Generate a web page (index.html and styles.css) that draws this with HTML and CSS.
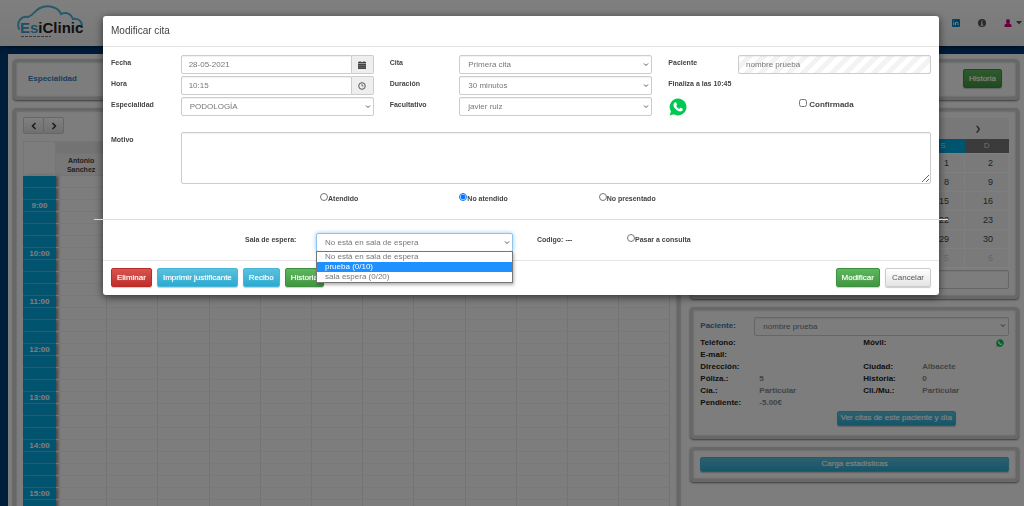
FILE: index.html
```
<!DOCTYPE html>
<html lang="es">
<head>
<meta charset="UTF-8" />
<meta name="viewport" content="width=device-width, initial-scale=1" />
<title>EsiClinic</title>
<link rel="stylesheet" href="styles.css">
</head>
<body>

<header class="navbar">
  <a href="#" class="logo" aria-label="EsiClinic">
    <svg width="70" height="34" viewBox="0 0 70 34">
      <path d="M3 24 C0 16 6 11 12 12 C17 11 18 6 24 3 C33 -1 43 3 45 9 C51 6 56 10 57 14 C62 13 66 16 66 21" fill="none" stroke="#4ab4dc" stroke-width="2" stroke-linecap="round" />
      <text x="4" y="28" class="logo-text"><tspan fill="#3aa0d0">Es</tspan><tspan fill="#222">iClinic</tspan></text>
      <path d="M5 31.500h30" stroke="#777" stroke-width="1" stroke-dasharray="3 1" />
    </svg>
  </a>
  <nav class="nav-icons">
    <a href="#" aria-label="LinkedIn">
      <svg width="8" height="8" viewBox="0 0 16 16"><rect width="16" height="16" rx="2" fill="#0080c0" /><path d="M3.500 6.500v6M3.500 3v1.500M7 12.500v-6M7 9q0-2.500 2.500-2.500T12 9v3.500" fill="none" stroke="#fff" stroke-width="2" /></svg>
    </a>
    <a href="#" class="info" aria-label="Información">
      <svg width="8" height="8" viewBox="0 0 16 16"><circle cx="8" cy="8" r="8" fill="#555" /><path d="M8 3v2.500M6 7.500h2v4.500M5.500 12.500h5" fill="none" stroke="#fff" stroke-width="2" /></svg>
    </a>
    <a href="#" class="user" aria-label="Usuario">
      <svg width="8" height="8" viewBox="0 0 16 16"><ellipse cx="8" cy="5" rx="4" ry="5" fill="#d6007f" /><path d="M1 16v-3q0-3 4-4h6q4 1 4 4v3z" fill="#d6007f" /></svg>
      <svg width="6" height="4" viewBox="0 0 6 4"><path d="M0 0h6L3 3.500z" fill="#555" /></svg>
    </a>
  </nav>
</header>

<main class="page">
  <section class="panel filter">
    <strong class="blue">Especialidad</strong>
    <button type="button" class="btn btn-success">Historia</button>
  </section>

  <div class="columns">
    <section class="panel agenda">
      <div class="btn-group">
        <button type="button" aria-label="Anterior"><svg width="6" height="8" viewBox="0 0 6 8"><path d="M4.500 1L1.500 4l3 3" /></svg></button>
        <button type="button" aria-label="Siguiente"><svg width="6" height="8" viewBox="0 0 6 8"><path d="M1.500 1l3 3-3 3" /></svg></button>
      </div>
      <table class="schedule">
        <thead>
          <tr><th rowspan="2" class="corner"></th><th colspan="12" class="top"></th></tr>
          <tr class="names"><th>Antonio Sanchez</th><th></th><th></th><th></th><th></th><th></th><th></th><th></th><th></th><th></th><th></th><th></th></tr>
        </thead>
        <tbody id="slots"></tbody>
      </table>
    </section>

    <aside class="side">
      <section class="panel month">
        <div class="month-head"><button type="button" aria-label="Mes siguiente">❯</button></div>
        <table class="days">
          <thead><tr><th>L</th><th>M</th><th>X</th><th>J</th><th>V</th><th>S</th><th>D</th></tr></thead>
          <tbody id="days"></tbody>
        </table>
        <input type="text" class="control" aria-label="Buscar">
      </section>

      <section class="panel patient">
        <div class="patient-pick">
          <label for="patient" class="blue">Paciente:</label>
          <select id="patient" class="control"><option>nombre prueba</option></select>
        </div>
        <dl class="data">
          <dt>Teléfono:</dt><dd></dd><dt>Móvil:</dt>
          <dd class="phone"><svg width="8" height="8" viewBox="0 0 32 32"><use href="#whatsapp" /></svg></dd>
          <dt>E-mail:</dt><dd class="wide"></dd>
          <dt>Dirección:</dt><dd></dd><dt>Ciudad:</dt><dd>Albacete</dd>
          <dt>Póliza.:</dt><dd>5</dd><dt>Historia:</dt><dd>0</dd>
          <dt>Cía.:</dt><dd>Particular</dd><dt>Cli./Mu.:</dt><dd>Particular</dd>
          <dt>Pendiente:</dt><dd class="wide">-5.00€</dd>
        </dl>
        <div class="patient-action">
          <button type="button" class="btn btn-info btn-sm">Ver citas de este paciente y día</button>
        </div>
      </section>

      <section class="panel stats">
        <button type="button" class="btn btn-info btn-sm">Carga estadísticas</button>
      </section>
    </aside>
  </div>
</main>

<div class="backdrop">
  <form class="modal" role="dialog" aria-labelledby="modalTitle">
    <h1 id="modalTitle">Modificar cita</h1>

    <div class="modal-body">
      <div class="row">
        <label for="fecha">Fecha</label>
        <div class="field group">
          <input type="text" id="fecha" class="control" value="28-05-2021">
          <span class="addon"><svg width="8" height="8" viewBox="0 0 8 8"><path d="M0 1h8v1.500H0zM1.500 0h1v1h-1zM5.500 0h1v1h-1zM0 3h8v5H0z" fill="#444" /><path d="M0 4.500h8M0 6.300h8" stroke="#999" stroke-width=".4" /></svg></span>
        </div>
        <label for="cita">Cita</label>
        <div class="field"><select id="cita" class="control"><option>Primera cita</option></select></div>
        <label for="paciente">Paciente</label>
        <div class="field"><input type="text" id="paciente" class="control striped" value="nombre prueba" readonly></div>
      </div>

      <div class="row">
        <label for="hora">Hora</label>
        <div class="field group">
          <input type="text" id="hora" class="control" value="10:15">
          <span class="addon"><svg width="8" height="8" viewBox="0 0 8 8" fill="none" stroke="#555"><circle cx="4" cy="4" r="3.300" /><path d="M4 2v2h1.500" stroke-width=".8" /></svg></span>
        </div>
        <label for="duracion">Duración</label>
        <div class="field"><select id="duracion" class="control"><option>30 minutos</option></select></div>
        <strong class="ends">Finaliza a las 10:45</strong>
      </div>

      <div class="row">
        <label for="especialidad">Especialidad</label>
        <div class="field"><select id="especialidad" class="control"><option>PODOLOGÍA</option></select></div>
        <label for="facultativo">Facultativo</label>
        <div class="field"><select id="facultativo" class="control"><option>javier ruiz</option></select></div>
        <a href="#" class="whatsapp" aria-label="WhatsApp">
          <svg width="18" height="18" viewBox="0 0 32 32">
            <g id="whatsapp">
              <path d="M16 1a15 15 0 1 1-7.500 28L1 31l2.500-7A15 15 0 0 1 16 1z" fill="#00c853" />
              <path d="M10 8c1-1 2.500-.5 3 .5l1.200 3c.3.800-1 2-1.200 2.500 1 2.500 3 4.200 5.500 5.200.8-.5 1.500-2 2.500-1.700l3 1.500c1 .6.500 2.500-.5 3.500-2 2-5 1.500-8 0-4-2-7-5.500-7.500-9-.2-2 .7-4.200 2-5.500z" fill="#fff" />
            </g>
          </svg>
        </a>
        <div class="field confirm">
          <input type="checkbox" id="confirmada"><label for="confirmada">Confirmada</label>
        </div>
      </div>

      <div class="row reason">
        <label for="motivo">Motivo</label>
        <div class="field full"><textarea id="motivo" class="control"></textarea></div>
      </div>

      <div class="row status">
        <div class="choice first"><input type="radio" name="estado" id="atendido"><label for="atendido">Atendido</label></div>
        <div class="choice"><input type="radio" name="estado" id="noAtendido" checked><label for="noAtendido">No atendido</label></div>
        <div class="choice"><input type="radio" name="estado" id="noPresentado"><label for="noPresentado">No presentado</label></div>
      </div>

      <hr>

      <div class="waiting">
        <label for="sala">Sala de espera:</label>
        <div class="dropdown">
          <select id="sala" class="control focused"><option>No está en sala de espera</option></select>
          <ul class="options">
            <li>No está en sala de espera</li>
            <li class="active">prueba (0/10)</li>
            <li>sala espera (0/20)</li>
          </ul>
        </div>
        <span class="code"><strong>Codigo:</strong> ---</span>
        <div class="choice"><input type="radio" name="consulta" id="consulta"><label for="consulta">Pasar a consulta</label></div>
      </div>
    </div>

    <footer class="modal-footer">
      <button type="button" class="btn btn-danger">Eliminar</button>
      <button type="button" class="btn btn-info">Imprimir justificante</button>
      <button type="button" class="btn btn-info">Recibo</button>
      <button type="button" class="btn btn-success">Historia</button>
      <button type="submit" class="btn btn-success push">Modificar</button>
      <button type="button" class="btn btn-default">Cancelar</button>
    </footer>
  </form>
</div>

<script src="script.js"></script>
</body>
</html>
```
FILE: styles.css
```
* {
  box-sizing: border-box;
}
body {
  margin: 0;
  height: 100vh;
  overflow: hidden;
  font: 8px/12px "Liberation Sans", Arial, sans-serif;
  color: #444;
  background: #003a75;
}
button, input, select, textarea {
  font: inherit;
  color: inherit;
}
a {
  color: inherit;
}
svg {
  display: block;
}

/* top bar */
.navbar {
  display: flex;
  justify-content: space-between;
  align-items: flex-start;
  height: 46px;
  padding: 5px 2px 0 16px;
  background: linear-gradient(#fff, #f0f0f0);
  box-shadow: 0 1px 5px rgba(0, 0, 0, .6);
  position: relative;
}
.logo-text {
  font: bold 15px "Liberation Sans", Arial, sans-serif;
}
.nav-icons {
  display: flex;
  gap: 18px;
  padding-top: 14px;
}
.nav-icons .user {
  display: flex;
  align-items: center;
  gap: 4px;
}

/* page */
.page {
  margin: 8px 0 0 8px;
  padding: 5px;
  min-height: 100vh;
  background: #fafafa;
}
.panel {
  border: 3px solid #d0d0d0;
  border-radius: 4px;
  padding: 7px;
  background: #fafafa;
  box-shadow: 0 1px 2px #777, inset 0 0 2px #999;
}
.filter {
  display: flex;
  justify-content: space-between;
  align-items: flex-start;
  height: 41px;
  padding: 7px 14px 0 12px;
}
.filter strong {
  line-height: 20px;
}
.blue {
  color: #337ab7;
  font-weight: bold;
}
.columns {
  display: grid;
  grid-template-columns: 67fr 33fr;
  gap: 10px;
  margin-top: 8px;
}
.side {
  display: flex;
  flex-direction: column;
  gap: 8px;
}

/* agenda */
.btn-group {
  display: flex;
  margin-top: -1px;
}
.btn-group button {
  display: flex;
  align-items: center;
  justify-content: center;
  width: 21px;
  height: 17px;
  margin-right: -1px;
  padding: 0;
  border: 1px solid #ccc;
  border-radius: 2px;
  background: linear-gradient(#fff, #e0e0e0);
}
.btn-group path {
  fill: none;
  stroke: #333;
  stroke-width: 1.5;
}
.schedule {
  width: 100%;
  margin-top: 7px;
  border-collapse: collapse;
  table-layout: fixed;
}
.schedule th, .schedule td {
  height: 12px;
  padding: 0;
  line-height: 9px;
  border: 1px solid #eaeaea;
}
.schedule .corner {
  width: 32px;
}
.schedule .top {
  background: #e6e6e6;
}
.schedule .names th {
  height: 22px;
  padding: 0 8px;
  font-size: 7px;
  background: #f0f0f0;
}
.schedule tbody th {
  color: #fff;
  background: #00a8e0;
  border-color: #5bb0cc #00a8e0;
  box-shadow: 2px 0 3px #888;
}
.schedule tbody td {
  border-color: #f0f0f0 #e6e6e6;
}
.schedule tbody td:nth-child(2) {
  border-left-color: #00a8e0;
}

/* month */
.month-head {
  display: flex;
  justify-content: flex-end;
  height: 21px;
  padding-right: 28px;
  background: #f0f0f0;
}
.month-head button {
  border: 0;
  padding: 0;
  font-size: 7px;
  background: none;
}
.days {
  width: 100%;
  border-collapse: collapse;
  table-layout: fixed;
}
.days th {
  height: 14px;
  padding: 0;
  color: #ddd;
  background: #00a8e0;
  font-weight: normal;
}
.days th:last-child {
  background: #777;
}
.days td {
  height: 19px;
  padding: 0 15px 0 0;
  font-size: 9px;
  text-align: right;
  border: 1px solid #fff;
  background: #f5f5f5;
}
.days .other {
  color: #ccc;
}
.month .control {
  margin-top: 2px;
}

/* patient */
.patient-pick {
  display: grid;
  grid-template-columns: 54px 1fr;
  line-height: 18px;
}
.data {
  display: grid;
  grid-template-columns: 59px 104px 59px 1fr;
  margin: 0;
  padding: 1px 0 2px;
  line-height: 12px;
  font-weight: bold;
}
.data dt {
  color: #222;
}
.data dd {
  margin: 0;
  color: #888;
}
.data .wide {
  grid-column: span 3;
}
.data .phone {
  display: flex;
  align-items: center;
  justify-content: flex-end;
  padding-right: 5px;
}
.patient-action {
  padding-left: 27%;
  text-align: center;
}
.patient {
  height: 132px;
}
.stats .btn {
  width: 100%;
}

/* controls */
.control {
  display: block;
  width: 100%;
  height: 19px;
  padding: 0 7px;
  color: #777;
  border: 1px solid #ccc;
  border-radius: 2px;
  background: #fff;
  box-shadow: inset 0 1px 1px rgba(0, 0, 0, .06);
}
select.control {
  appearance: none;
  padding-left: 8px;
  background: #fff url('data:image/svg+xml,<svg xmlns="http://www.w3.org/2000/svg" width="6" height="4"><path d="M1 .500l2 2 2-2" fill="none" stroke="%23555" stroke-width="1"/></svg>') no-repeat right 2px center;
}
.side .control {
  background-color: #fafafa;
}
.control.striped {
  background: repeating-linear-gradient(135deg, #fff 0 5px, #f3f3f3 5px 10px);
}
.control.focused {
  border-color: #8fc4ee;
  box-shadow: 0 0 4px rgba(102, 175, 233, .7);
  outline: 0;
}
textarea.control {
  height: 52px;
}
.btn {
  height: 19px;
  padding: 0 5px;
  color: #fff;
  border: 1px solid transparent;
  border-radius: 2px;
  line-height: 15px;
  text-shadow: 0 0 1px rgba(255, 255, 255, .7);
  box-shadow: 0 1px 1px rgba(0, 0, 0, .2);
  cursor: pointer;
}
.btn-sm {
  height: 15px;
  padding: 0 3px;
  line-height: 12px;
}
.btn-success {
  background: linear-gradient(#5cb85c, #419641);
  border-color: #3e8f3e;
}
.btn-info {
  background: linear-gradient(#5bc0de, #2aabd2);
  border-color: #4ab5d6;
}
.btn-danger {
  background: linear-gradient(#d9534f, #c12e2a);
  border-color: #b92c28;
}
.btn-default {
  color: #555;
  background: linear-gradient(#fff, #e4e4e4);
  border-color: #ccc;
  padding: 0 6px;
}

/* modal */
.backdrop {
  position: fixed;
  inset: 0;
  padding: 16px 85px 0 103px;
  background: rgba(0, 0, 0, .5);
}
.modal {
  border-radius: 3px;
  background: #fff;
  box-shadow: 0 2px 8px rgba(0, 0, 0, .6);
}
.modal h1 {
  margin: 0;
  padding: 8px;
  font-size: 10px;
  font-weight: normal;
  line-height: 14px;
  border-bottom: 1px solid #e5e5e5;
}
.modal-body {
  padding: 8px 0;
}
.row {
  display: grid;
  grid-template-columns: repeat(12, 1fr);
  margin-bottom: 2px;
}
.row > label, .row > .ends, .waiting {
  font-size: 7px;
  font-weight: bold;
}
.row > label, .row > .ends {
  padding: 2px 0 0 8px;
}
.row > .ends {
  grid-column: span 4;
}
.field {
  grid-column: span 3;
  padding: 0 8px;
}
.field.full {
  grid-column: span 11;
}
.group {
  display: flex;
}
.group .control {
  border-radius: 2px 0 0 2px;
}
.addon {
  display: flex;
  flex: none;
  align-items: center;
  justify-content: center;
  width: 22px;
  border: 1px solid #ccc;
  border-left: 0;
  border-radius: 0 2px 2px 0;
  background: #eee;
}
.whatsapp {
  padding: 1px 0 0 9px;
}
.confirm {
  display: flex;
  justify-content: center;
  gap: 2px;
  padding-top: 2px;
  padding-right: 24px;
  font-weight: bold;
}
.confirm input, .choice input {
  width: 8px;
  height: 8px;
  margin: 0;
}
.reason {
  margin-top: 16px;
}
.status {
  margin-top: 9px;
}
.choice {
  display: flex;
  grid-column: span 2;
  padding-left: 8px;
  font-size: 7px;
  font-weight: bold;
}
.choice.first {
  grid-column: 4 / span 2;
}
.modal hr {
  margin: 14px -9px 13px;
  border: 0;
  border-top: 1px solid #ddd;
}
.waiting {
  display: grid;
  grid-template-columns: 142fr 71fr 197fr 24fr 82fr 320fr;
}
.waiting > label, .code {
  padding-top: 1px;
}
.waiting > label {
  grid-column: 2;
}
.dropdown {
  position: relative;
  font-size: 8px;
  font-weight: normal;
}
.code {
  grid-column: 5;
}
.waiting .choice {
  grid-column: 6;
  padding-top: 1px;
}
.options {
  position: absolute;
  top: 18px;
  left: 0;
  right: 0;
  margin: 0;
  padding: 0;
  list-style: none;
  line-height: 10px;
  color: #777;
  border: 1px solid #777;
  background: #fff;
  box-shadow: 1px 2px 3px rgba(0, 0, 0, .3);
}
.options li {
  padding-left: 8px;
}
.options .active {
  color: #fff;
  background: #1e90ff;
}
.modal-footer {
  display: flex;
  gap: 5px;
  padding: 7px 8px 8px;
  border-top: 1px solid #e5e5e5;
}
.modal-footer .push {
  margin-left: auto;
}
```
FILE: script.js
```
// quarter-hour slots, first row is 8:30
const slots = document.getElementById("slots");
for (let i = 0; i < 30; i++) {
  const minutes = 8 * 60 + 30 + i * 15;
  const label = minutes % 60 === 0 ? minutes / 60 + ":00" : "";
  slots.insertAdjacentHTML("beforeend", `<tr><th>${label}</th>${"<td></td>".repeat(12)}</tr>`);
}

// May 2021, weeks start on Monday
const days = document.getElementById("days");
for (let week = 0; week < 6; week++) {
  let cells = "";
  for (let day = 0; day < 7; day++) {
    const date = new Date(2021, 3, 26 + week * 7 + day);
    cells += `<td class="${date.getMonth() === 4 ? "" : "other"}">${date.getDate()}</td>`;
  }
  days.insertAdjacentHTML("beforeend", `<tr>${cells}</tr>`);
}
```
